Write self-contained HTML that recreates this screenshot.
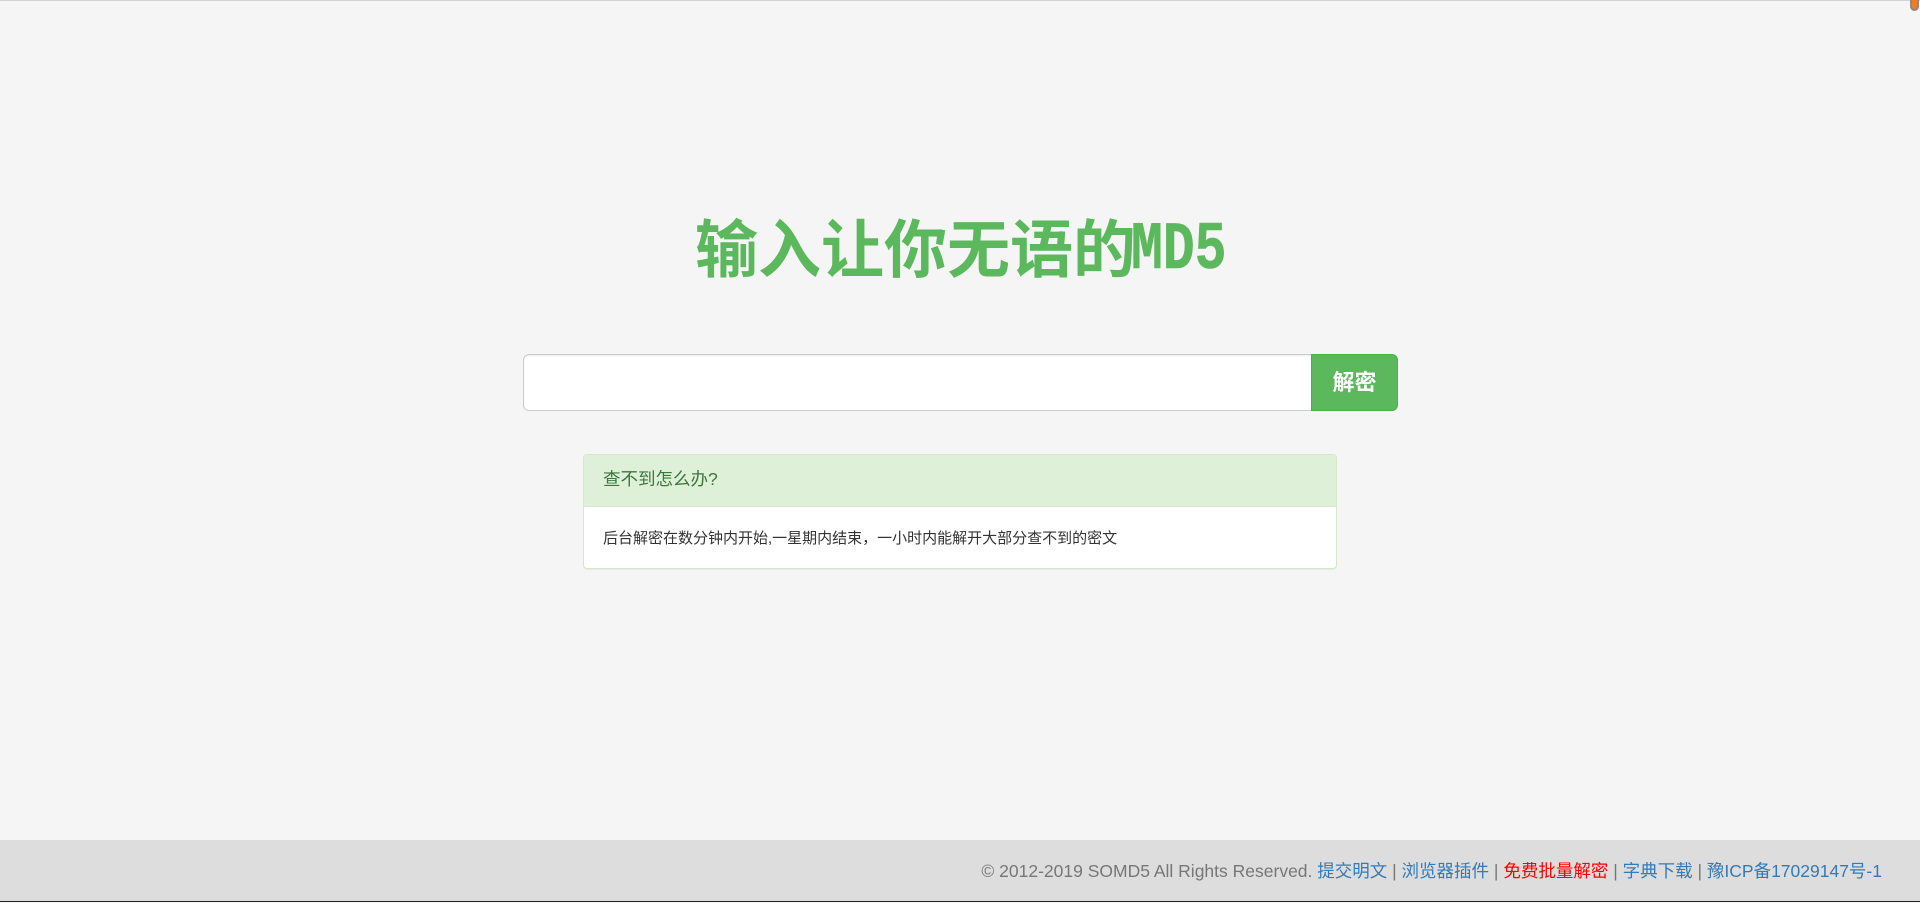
<!DOCTYPE html>
<html lang="zh-CN">
<head>
<meta charset="utf-8">
<title>SOMD5</title>
<style>
html,body{margin:0;padding:0;width:1920px;height:902px;overflow:hidden;background:#f5f5f5;font-family:"Liberation Sans","Noto Sans CJK SC",sans-serif;}
*{box-sizing:border-box}
.top{position:absolute;left:0;top:0;width:1920px;height:1px;background:#d4d4d4}
.pin{position:absolute;left:1910px;top:-4px;width:9px;height:15px;background:#f47a20;border:2px solid #8a8a8a;border-radius:0 0 5px 5px}
h1{position:absolute;left:695px;top:206px;width:560px;margin:0;font:bold 63px/80px "WenQuanYi Zen Hei","Noto Sans CJK SC",sans-serif;color:#5cb85c;white-space:nowrap}
h1 span{position:absolute;left:436px;top:5px;display:block;width:123px;font:bold 68px/80px "Liberation Mono",monospace;transform:scaleX(.78);transform-origin:0 50%;-webkit-text-stroke:.6px #5cb85c}
.input{position:absolute;left:523px;top:354px;width:789px;height:57px;background:#fff;border:1px solid #ccc;border-radius:6px 0 0 6px;box-shadow:inset 0 1px 1px rgba(0,0,0,.075)}
.btn{position:absolute;left:1311px;top:354px;width:87px;height:57px;background:#5cb85c;border:1px solid #4cae4c;border-radius:0 6px 6px 0;color:#fff;font:bold 22px/55px "Liberation Sans","Noto Sans CJK SC",sans-serif;text-align:center}
.panel{position:absolute;left:583px;top:454px;width:754px;height:115px;background:#fff;border:1px solid #d6e9c6;border-radius:4px;box-shadow:0 1px 1px rgba(0,0,0,.05)}
.ph{height:52px;background:#dff0d8;border-bottom:1px solid #d6e9c6;color:#3c763d;font-size:17.5px;line-height:48px;padding-left:19px;border-radius:3px 3px 0 0}
.pb{padding-left:19px;font-size:15px;line-height:21px;padding-top:21px;color:#333}
.foot{position:absolute;left:0;top:840px;width:1920px;height:61px;background:#ddd;color:#777;font-size:17.5px;line-height:63px;text-align:right;padding-right:38px;white-space:nowrap}
.foot a{color:#337ab7;text-decoration:none}
.foot a.r{color:#f00}
.line{position:absolute;left:0;top:901px;width:1920px;height:1px;background:#222}
</style>
</head>
<body>
<div class="top"></div>
<div class="pin"></div>
<h1>输入让你无语的<span>MD5</span></h1>
<div class="input"></div>
<div class="btn">解密</div>
<div class="panel">
<div class="ph">查不到怎么办?</div>
<div class="pb">后台解密在数分钟内开始,一星期内结束，一小时内能解开大部分查不到的密文</div>
</div>
<div class="foot">© 2012-2019 SOMD5 All Rights Reserved. <a href="#">提交明文</a> | <a href="#">浏览器插件</a> | <a href="#" class="r">免费批量解密</a> | <a href="#">字典下载</a> | <a href="#">豫ICP备17029147号-1</a></div>
<div class="line"></div>
</body>
</html>
